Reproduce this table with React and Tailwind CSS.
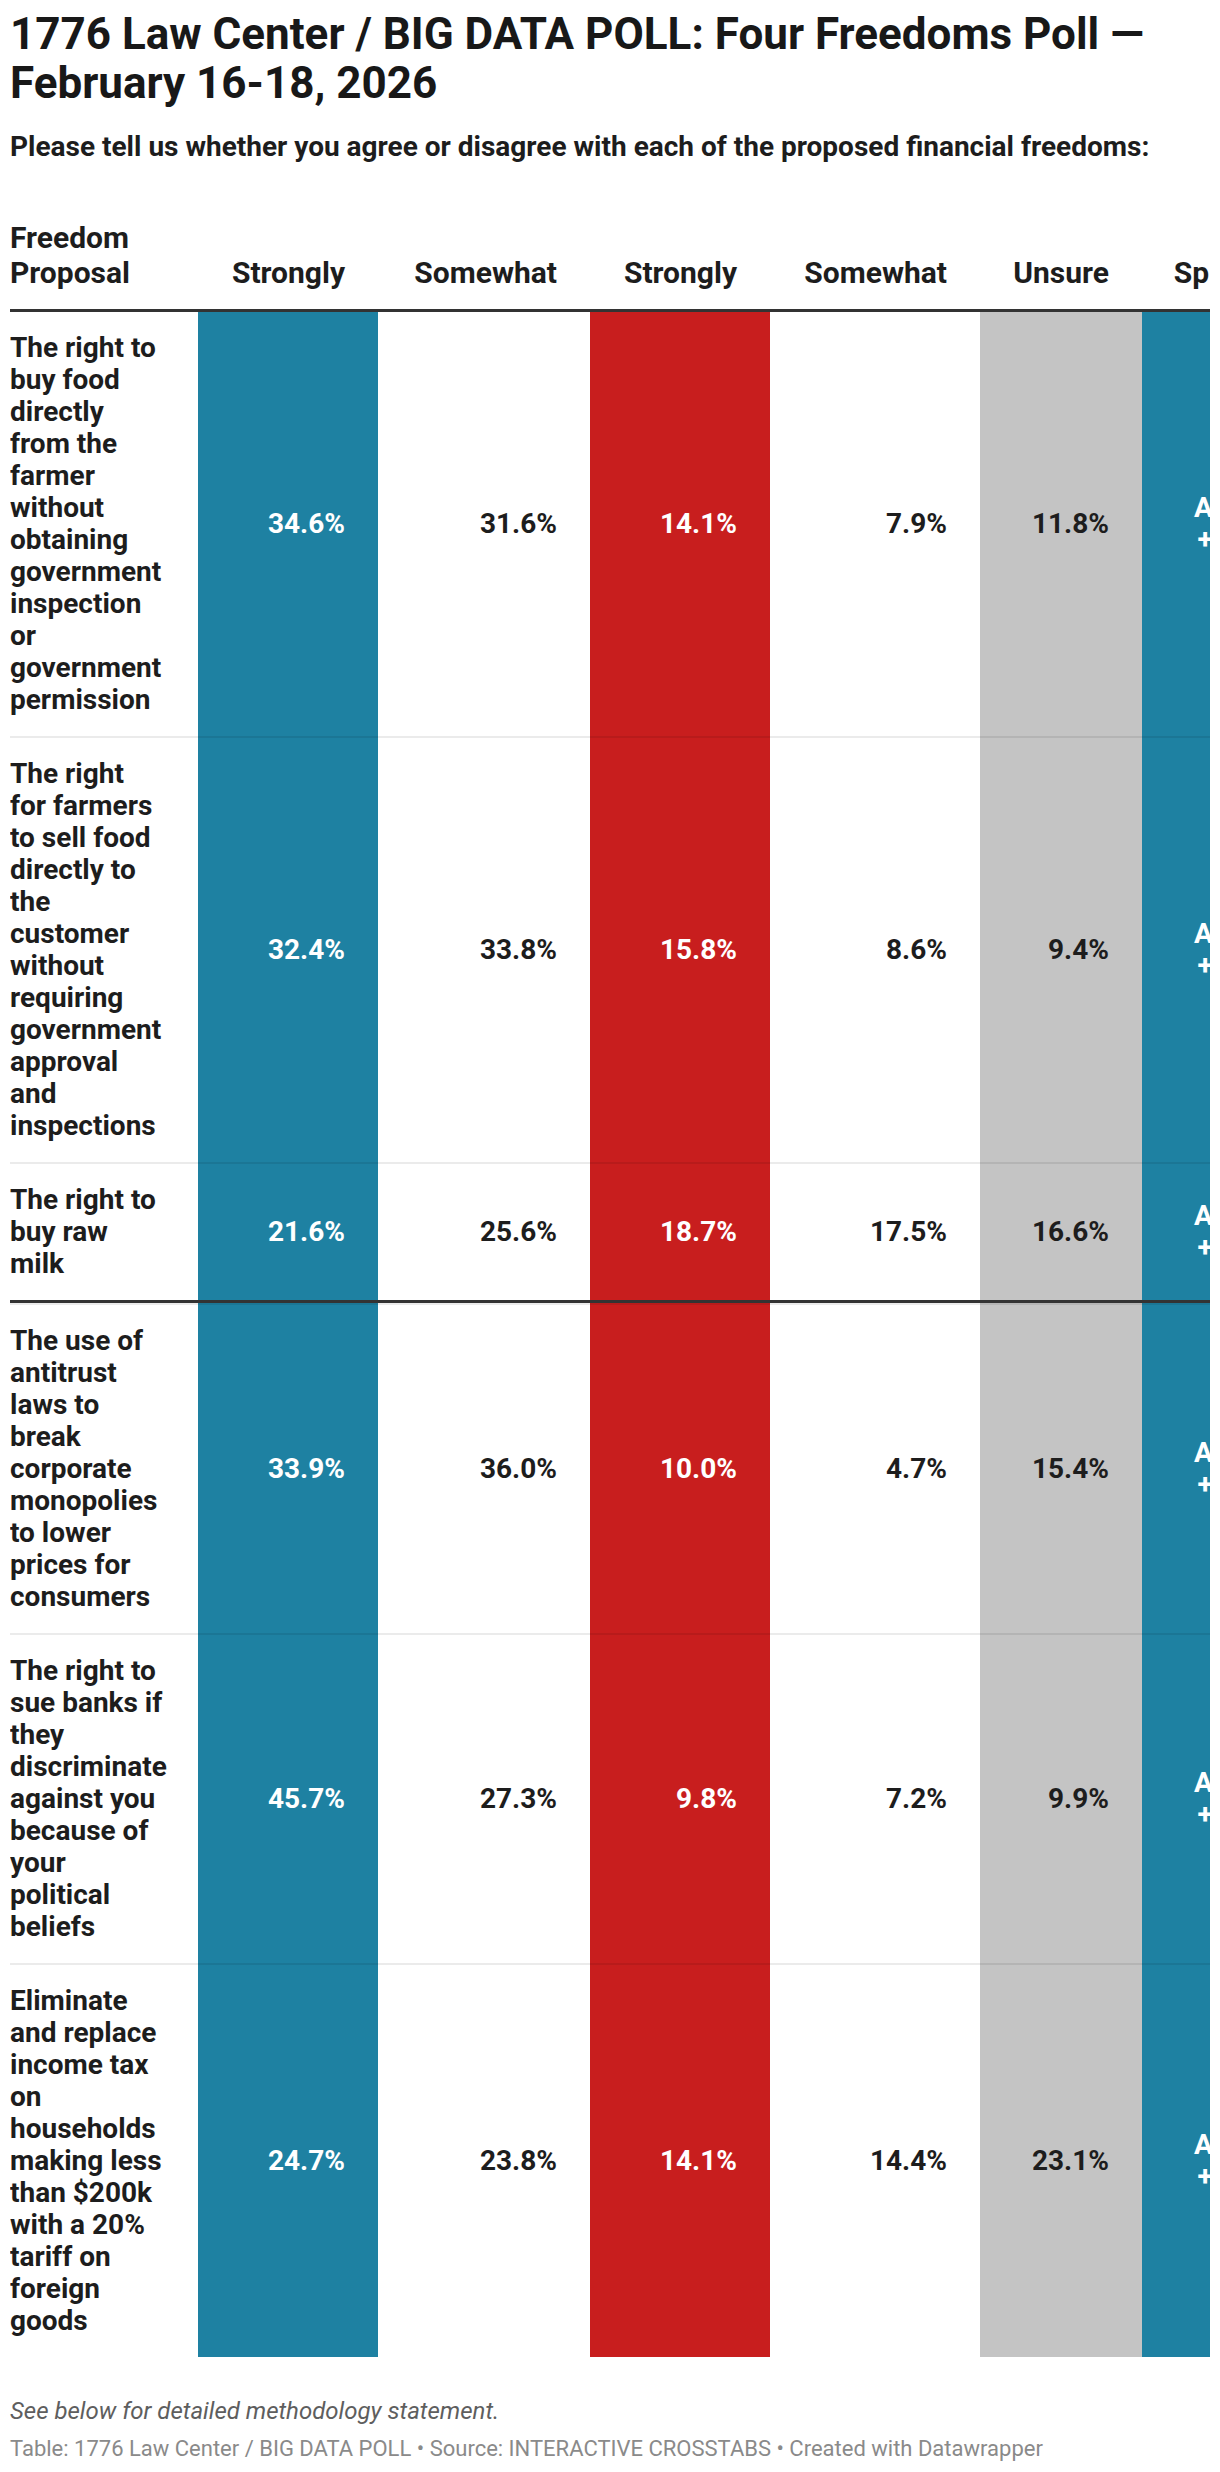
import React from "react";

const rows = [
  {
    lines: ["The right to", "buy food", "directly", "from the", "farmer", "without", "obtaining", "government", "inspection", "or", "government", "permission"],
    v: ["34.6%", "31.6%", "14.1%", "7.9%", "11.8%"],
    s: ["Agree", "+44.2"],
  },
  {
    lines: ["The right", "for farmers", "to sell food", "directly to", "the", "customer", "without", "requiring", "government", "approval", "and", "inspections"],
    v: ["32.4%", "33.8%", "15.8%", "8.6%", "9.4%"],
    s: ["Agree", "+41.8"],
  },
  {
    lines: ["The right to", "buy raw", "milk"],
    v: ["21.6%", "25.6%", "18.7%", "17.5%", "16.6%"],
    s: ["Agree", "+11.0"],
  },
  {
    lines: ["The use of", "antitrust", "laws to", "break", "corporate", "monopolies", "to lower", "prices for", "consumers"],
    v: ["33.9%", "36.0%", "10.0%", "4.7%", "15.4%"],
    s: ["Agree", "+55.2"],
  },
  {
    lines: ["The right to", "sue banks if", "they", "discriminate", "against you", "because of", "your", "political", "beliefs"],
    v: ["45.7%", "27.3%", "9.8%", "7.2%", "9.9%"],
    s: ["Agree", "+56.0"],
  },
  {
    lines: ["Eliminate", "and replace", "income tax", "on", "households", "making less", "than $200k", "with a 20%", "tariff on", "foreign", "goods"],
    v: ["24.7%", "23.8%", "14.1%", "14.4%", "23.1%"],
    s: ["Agree", "+20.0"],
  },
];

const cols = [
  { label: "Strongly", cls: "w-[180px] shrink-0 bg-[#1e81a2] text-white" },
  { label: "Somewhat", cls: "w-[212px] shrink-0 bg-white text-[#1d1d1d]" },
  { label: "Strongly", cls: "w-[180px] shrink-0 bg-[#c81e1e] text-white" },
  { label: "Somewhat", cls: "w-[210px] shrink-0 bg-white text-[#1d1d1d]" },
  { label: "Unsure", cls: "w-[162px] shrink-0 bg-[#c4c4c4] text-[#1d1d1d]" },
];

const headW = ["w-[180px]", "w-[212px]", "w-[180px]", "w-[210px]", "w-[162px]"];

const borderFor = [
  "border-b-2 border-black/[0.08]",
  "border-b-2 border-black/[0.08]",
  "border-b-[3px] border-[#333333]",
  "border-t-2 border-b-2 border-black/[0.08]",
  "border-b-2 border-black/[0.08]",
  "",
];

export default function App() {
  return (
    <div className="w-[1220px] bg-white px-[10px] pt-[10px] pb-[4px] font-['Roboto'] text-[#1d1d1d]">
      <h1 className="text-[44px] leading-[49px] font-bold text-[#181818]">
        1776 Law Center / BIG DATA POLL: Four Freedoms Poll —
        <br />
        February 16-18, 2026
      </h1>
      <p className="mt-[23px] text-[28px] leading-[32px] font-bold text-[#1d1d1d] whitespace-nowrap">
        Please tell us whether you agree or disagree with each of the proposed financial freedoms:
      </p>

      <div className="mt-[57px] w-[1200px] overflow-hidden">
        <div className="w-[1302px]">
          <div className="flex items-end border-b-[3px] border-[#333333] pb-[19px] text-[30px] leading-[35px] font-bold">
            <div className="w-[188px] shrink-0">
              <div>Freedom</div>
              <div>Proposal</div>
            </div>
            {cols.map((c, i) => (
              <div key={i} className={`${headW[i]} shrink-0 pr-[33px] text-right`}>
                {c.label}
              </div>
            ))}
            <div className="w-[160px] shrink-0 pr-[33px] text-right">Spread</div>
          </div>

          {rows.map((r, ri) => (
            <div key={ri} className="flex text-[28px] leading-[32px] font-bold">
              <div className={`w-[188px] shrink-0 py-[20px] whitespace-nowrap ${borderFor[ri]}`}>
                {r.lines.map((l, li) => (
                  <div key={li}>{l}</div>
                ))}
              </div>
              {r.v.map((val, ci) => (
                <div
                  key={ci}
                  className={`${cols[ci].cls} ${borderFor[ri]} flex items-center justify-end pr-[33px]`}
                >
                  {val}
                </div>
              ))}
              <div
                className={`w-[160px] shrink-0 bg-[#1e81a2] text-white ${borderFor[ri]} flex flex-col items-end justify-center pr-[33px]`}
              >
                <div>{r.s[0]}</div>
                <div>{r.s[1]}</div>
              </div>
            </div>
          ))}
        </div>
      </div>

      <div className="mt-[35px] leading-[38px]">
        <p className="italic text-[24px] text-[#5e5e5e]">See below for detailed methodology statement.</p>
        <p className="text-[22px] text-[#8a8a8a]">
          Table: 1776 Law Center / BIG DATA POLL • Source: INTERACTIVE CROSSTABS • Created with Datawrapper
        </p>
      </div>
    </div>
  );
}
